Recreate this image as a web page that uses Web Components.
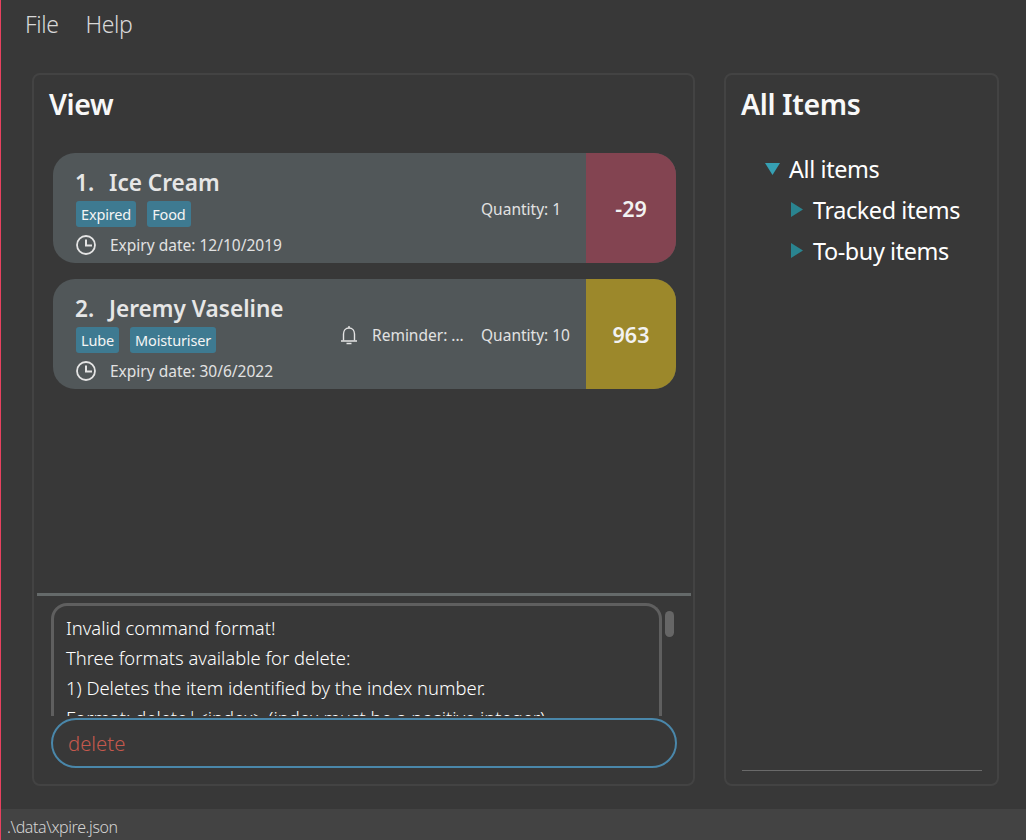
<!DOCTYPE html>
<html>
<head>
<meta charset="utf-8">
<title>Xpire</title>
<style>
  html, body { margin: 0; height: 100%; }
  body {
    background: #383838;
    font-family: "Noto Sans", "Open Sans", sans-serif;
    color: #fff;
  }
  xpire-app { height: 840px; }
</style>
</head>
<body>
<xpire-app>
  <menu-bar slot="menu">
    <span>File</span>
    <span>Help</span>
  </menu-bar>
  <side-panel slot="left" heading="View" class="view">
    <div slot="body" style="display:contents">
      <item-list>
        <item-card index="1" name="Ice Cream" expiry="12/10/2019" quantity="1" days="-29" status="expired">
          <item-tag>Expired</item-tag>
          <item-tag>Food</item-tag>
        </item-card>
        <item-card index="2" name="Jeremy Vaseline" expiry="30/6/2022" quantity="10" days="963" status="warn" reminder="Reminder: ...">
          <item-tag>Lube</item-tag>
          <item-tag>Moisturiser</item-tag>
        </item-card>
      </item-list>
      <result-box>
        <div>Invalid command format!</div>
        <div>Three formats available for delete:</div>
        <div>1) Deletes the item identified by the index number.</div>
        <div>Format: delete|&lt;index&gt; (index must be a positive integer)</div>
      </result-box>
      <command-box value="delete"></command-box>
    </div>
  </side-panel>
  <side-panel slot="right" heading="All Items" class="tree">
    <div slot="body" style="display:contents">
      <tree-view>
        <tree-row open>All items</tree-row>
        <tree-row depth="1">Tracked items</tree-row>
        <tree-row depth="1">To-buy items</tree-row>
      </tree-view>
    </div>
  </side-panel>
  <status-bar slot="status">.\data\xpire.json</status-bar>
</xpire-app>

<script>
  // small helper, every element below just sets its shadow html once
  function shadow(el, html) {
    let root = el.attachShadow({ mode: "open" });
    root.innerHTML = html;
    return root;
  }

  class XpireApp extends HTMLElement {
    constructor() {
      super();
      shadow(this, `
        <style>
          :host { display: flex; flex-direction: column; border-left: 1px solid #e8415f; box-sizing: border-box; width: 1026px; }
          .main { flex: 1; min-height: 0; display: flex; gap: 29px; padding: 23px 27px 23px 31px; }
          .left { display: flex; width: 663px; }
          .right { display: flex; width: 275px; }
        </style>
        <slot name="menu"></slot>
        <div class="main">
          <div class="left"><slot name="left"></slot></div>
          <div class="right"><slot name="right"></slot></div>
        </div>
        <slot name="status"></slot>`);
    }
  }

  class MenuBar extends HTMLElement {
    constructor() {
      super();
      shadow(this, `
        <style>
          :host { display: flex; gap: 27px; height: 50px; align-items: center; padding: 0 0 2px 24px; box-sizing: border-box;
            font-size: 23px; font-weight: 300; color: #d8d8d8; letter-spacing: -0.4px; }
        </style>
        <slot></slot>`);
    }
  }

  class SidePanel extends HTMLElement {
    constructor() {
      super();
      let h = this.getAttribute("heading");
      shadow(this, `
        <style>
          :host { display: flex; flex: 1; flex-direction: column; border: 2px solid #434343; border-radius: 8px; box-sizing: border-box; min-width: 0; }
          h2 { margin: 0; font-size: 28.5px; font-weight: 600; line-height: 36px; padding: 11px 0 0 15px; color: #f8f8f8; letter-spacing: -0.4px; }
          .body { flex: 1; display: flex; flex-direction: column; min-height: 0; }
          :host(.tree) .rule { display: block; height: 1px; background: #6a6a6a; margin: 0 15px 13px 16px; }
          .rule { display: none; }
        </style>
        <h2>${h}</h2>
        <div class="body"><slot name="body"></slot></div>
        <div class="rule"></div>`);
    }
  }

  class ItemList extends HTMLElement {
    constructor() {
      super();
      shadow(this, `
        <style>
          :host { display: flex; flex-direction: column; gap: 16px; height: 440px; padding: 31px 15px 0 16px; border-bottom: 3px solid #656a6a; margin: 0 2px 0 3px; }
        </style>
        <slot></slot>`);
    }
  }

  class ItemCard extends HTMLElement {
    constructor() {
      super();
      let a = (n) => this.getAttribute(n);
      let color = a("status") == "expired" ? "#834451" : "#9c882b";
      let reminder = a("reminder") ? `
        <div class="reminder">
          <svg width="18" height="20" viewBox="0 0 18 20" fill="none" stroke="#e4e4e4" stroke-width="1.4">
            <path d="M3.5 15.5V9c0-3.4 2.2-6 5.5-6s5.5 2.6 5.5 6v6.5"/>
            <path d="M1 16h16" stroke-width="1.6"/>
            <path d="M9 1v2M6.5 18.5h5"/>
          </svg>
          <span>${a("reminder")}</span>
        </div>` : "";
      shadow(this, `
        <style>
          :host { display: flex; height: 110px; border-radius: 22px; overflow: hidden; background: #515759; flex: none; color: #e2e2e2; }
          .info { flex: 1; display: flex; flex-direction: column; padding: 14px 0 0 22px; min-width: 0; }
          .name { font-size: 22.6px; font-weight: 600; line-height: 32px; color: #e6e6e6; white-space: nowrap; }
          .name span { margin-right: 9px; }
          .tags { display: flex; gap: 11px; margin: 2px 0 0 1px; }
          .expiry { display: flex; align-items: center; gap: 13px; margin-top: 8px; font-size: 15.5px; line-height: 20px; white-space: nowrap; }
          .expiry svg { flex: none; }
          .reminder { display: flex; align-items: center; gap: 14px; width: 141px; flex: none; padding-top: 2px; font-size: 15.5px; white-space: nowrap; }
          .qty { width: 105px; flex: none; display: flex; align-items: center; padding-top: 2px; font-size: 15.5px; white-space: nowrap; }
          .days { width: 90px; flex: none; display: flex; align-items: center; justify-content: center; background: ${color};
            font-size: 21.5px; font-weight: 600; color: #f2f2f2; }
        </style>
        <div class="info">
          <div class="name"><span>${a("index")}.</span> ${a("name")}</div>
          <div class="tags"><slot></slot></div>
          <div class="expiry">
            <svg width="22" height="20" viewBox="0 0 22 20" fill="none" stroke="#e4e4e4" stroke-width="2">
              <circle cx="11" cy="10" r="9" stroke-width="1.8"/>
              <path d="M11 4.5V10.5H17" stroke-width="2"/>
            </svg>
            <span>Expiry date: ${a("expiry")}</span>
          </div>
        </div>
        ${reminder}
        <div class="qty">Quantity: ${a("quantity")}</div>
        <div class="days">${a("days")}</div>`);
    }
  }

  class ItemTag extends HTMLElement {
    constructor() {
      super();
      shadow(this, `
        <style>
          :host { display: block; height: 26px; line-height: 26px; padding: 0 5px; background: #3e7a91; border-radius: 3px; font-size: 14.5px; color: #f4f4f4; letter-spacing: -0.15px; }
        </style>
        <slot></slot>`);
    }
  }

  class ResultBox extends HTMLElement {
    constructor() {
      super();
      shadow(this, `
        <style>
          :host { display: flex; height: 120px; padding: 7px 0 0 17px; box-sizing: border-box; flex: none; }
          .box { width: 611px; height: 113px; box-sizing: border-box; border: 3px solid #5f5f5f; border-bottom: 0; border-radius: 16px 16px 0 0; overflow: hidden;
            padding: 7px 12px; font-size: 18.4px; line-height: 30px; font-weight: 300; color: #fff; white-space: nowrap; }
          .thumb { width: 9px; height: 26px; border-radius: 4.5px; background: #666; margin: 8px 0 0 3px; }
        </style>
        <div class="box"><slot></slot></div>
        <div class="thumb"></div>`);
    }
  }

  class CommandBox extends HTMLElement {
    constructor() {
      super();
      shadow(this, `
        <style>
          :host { display: block; height: 50px; margin: 2px 16px 0 17px; box-sizing: border-box; border: 2px solid #4a87aa; border-radius: 25px;
            padding: 0 15px; line-height: 46px; font-size: 20.3px; font-weight: 300; color: #c5584d; flex: none; }
        </style>
        ${this.getAttribute("value")}`);
    }
  }

  class TreeView extends HTMLElement {
    constructor() {
      super();
      shadow(this, `
        <style>
          :host { display: flex; flex-direction: column; flex: 1; padding: 26px 0 0 39px; }
        </style>
        <slot></slot>`);
    }
  }

  class TreeRow extends HTMLElement {
    constructor() {
      super();
      let open = this.hasAttribute("open");
      let depth = +(this.getAttribute("depth") || 0);
      let arrow = open
        ? `<svg width="15" height="12" viewBox="0 0 15 12"><path d="M0 0H15L7.5 12Z" fill="#36a0b3"/></svg>`
        : `<svg width="12" height="15" viewBox="0 0 12 15" style="margin-left:2px"><path d="M0 0L12 7.5L0 15Z" fill="#2a8490"/></svg>`;
      shadow(this, `
        <style>
          :host { display: block; height: 41px; color: #fff; font-size: 23.4px; font-weight: 400; letter-spacing: -0.4px; padding-left: ${depth * 24}px; box-sizing: border-box; white-space: nowrap; }
          .row { display: flex; align-items: center; height: 41px; }
          .arrow { width: 24px; flex: none; display: flex; }
        </style>
        <div class="row"><span class="arrow">${arrow}</span><slot></slot></div>`);
    }
  }

  class StatusBar extends HTMLElement {
    constructor() {
      super();
      shadow(this, `
        <style>
          :host { display: block; height: 31px; line-height: 36px; background: #434343; padding-left: 6px; font-size: 16px; font-weight: 300; color: #d4d4d4; letter-spacing: -0.4px; overflow: hidden; }
        </style>
        <slot></slot>`);
    }
  }

  customElements.define("xpire-app", XpireApp);
  customElements.define("menu-bar", MenuBar);
  customElements.define("side-panel", SidePanel);
  customElements.define("item-list", ItemList);
  customElements.define("item-card", ItemCard);
  customElements.define("item-tag", ItemTag);
  customElements.define("result-box", ResultBox);
  customElements.define("command-box", CommandBox);
  customElements.define("tree-view", TreeView);
  customElements.define("tree-row", TreeRow);
  customElements.define("status-bar", StatusBar);
</script>
</body>
</html>
